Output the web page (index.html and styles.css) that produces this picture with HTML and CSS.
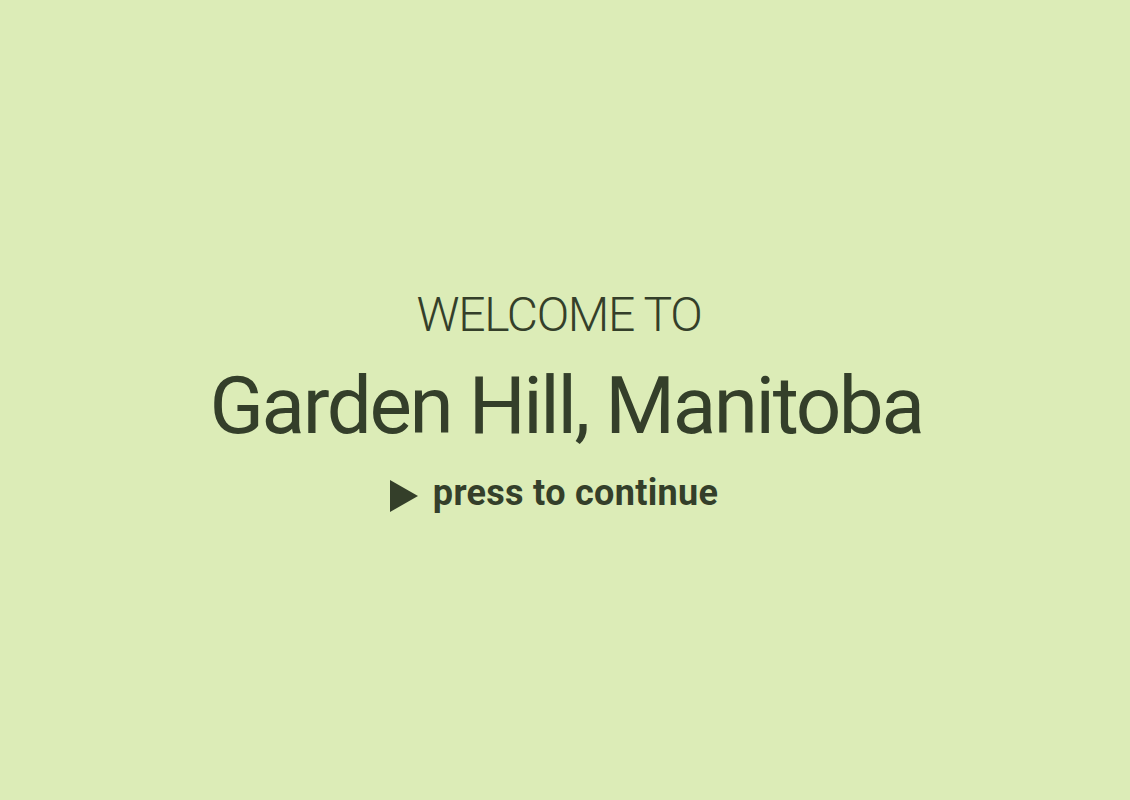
FILE: index.html
```html
<!DOCTYPE html>
<html lang="en">
<head>
<meta charset="utf-8">
<title>Welcome</title>
<link rel="stylesheet" href="styles.css">
</head>
<body>
<main class="screen">
  <p class="kicker">WELCOME TO</p>
  <h1 class="place">Garden Hill, Manitoba</h1>
  <button class="continue" type="button">
    <svg class="play" viewBox="0 0 28 32" width="28" height="32" aria-hidden="true"><path d="M0 0 L28 16 L0 32 Z" fill="currentColor"/></svg>
    <span>press to continue</span>
  </button>
</main>
</body>
</html>
```
FILE: styles.css
```css
html, body {
  margin: 0;
  height: 100%;
}
body {
  background: #dcecb7;
  color: #343f2a;
  font-family: Roboto, "Open Sans", sans-serif;
}
.screen {
  height: 100%;
  display: flex;
  flex-direction: column;
  align-items: center;
  justify-content: center;
}
.kicker {
  margin: 1px 12px 0 0;
  font-size: 48px;
  font-weight: 300;
  line-height: 1;
  letter-spacing: -1.3px;
}
.place {
  margin: 27px 0 0 2px;
  font-size: 80px;
  font-weight: 400;
  line-height: 1;
  letter-spacing: -2.4px;
}
.continue {
  margin: 29px 22px 0 0;
  display: flex;
  align-items: center;
  gap: 15px;
  background: none;
  border: 0;
  padding: 0;
  color: inherit;
  font-family: inherit;
  font-size: 36px;
  font-weight: 700;
  line-height: 1;
  letter-spacing: 0.3px;
  cursor: pointer;
}
.play {
  display: block;
  transform: translateY(3px);
}
```
